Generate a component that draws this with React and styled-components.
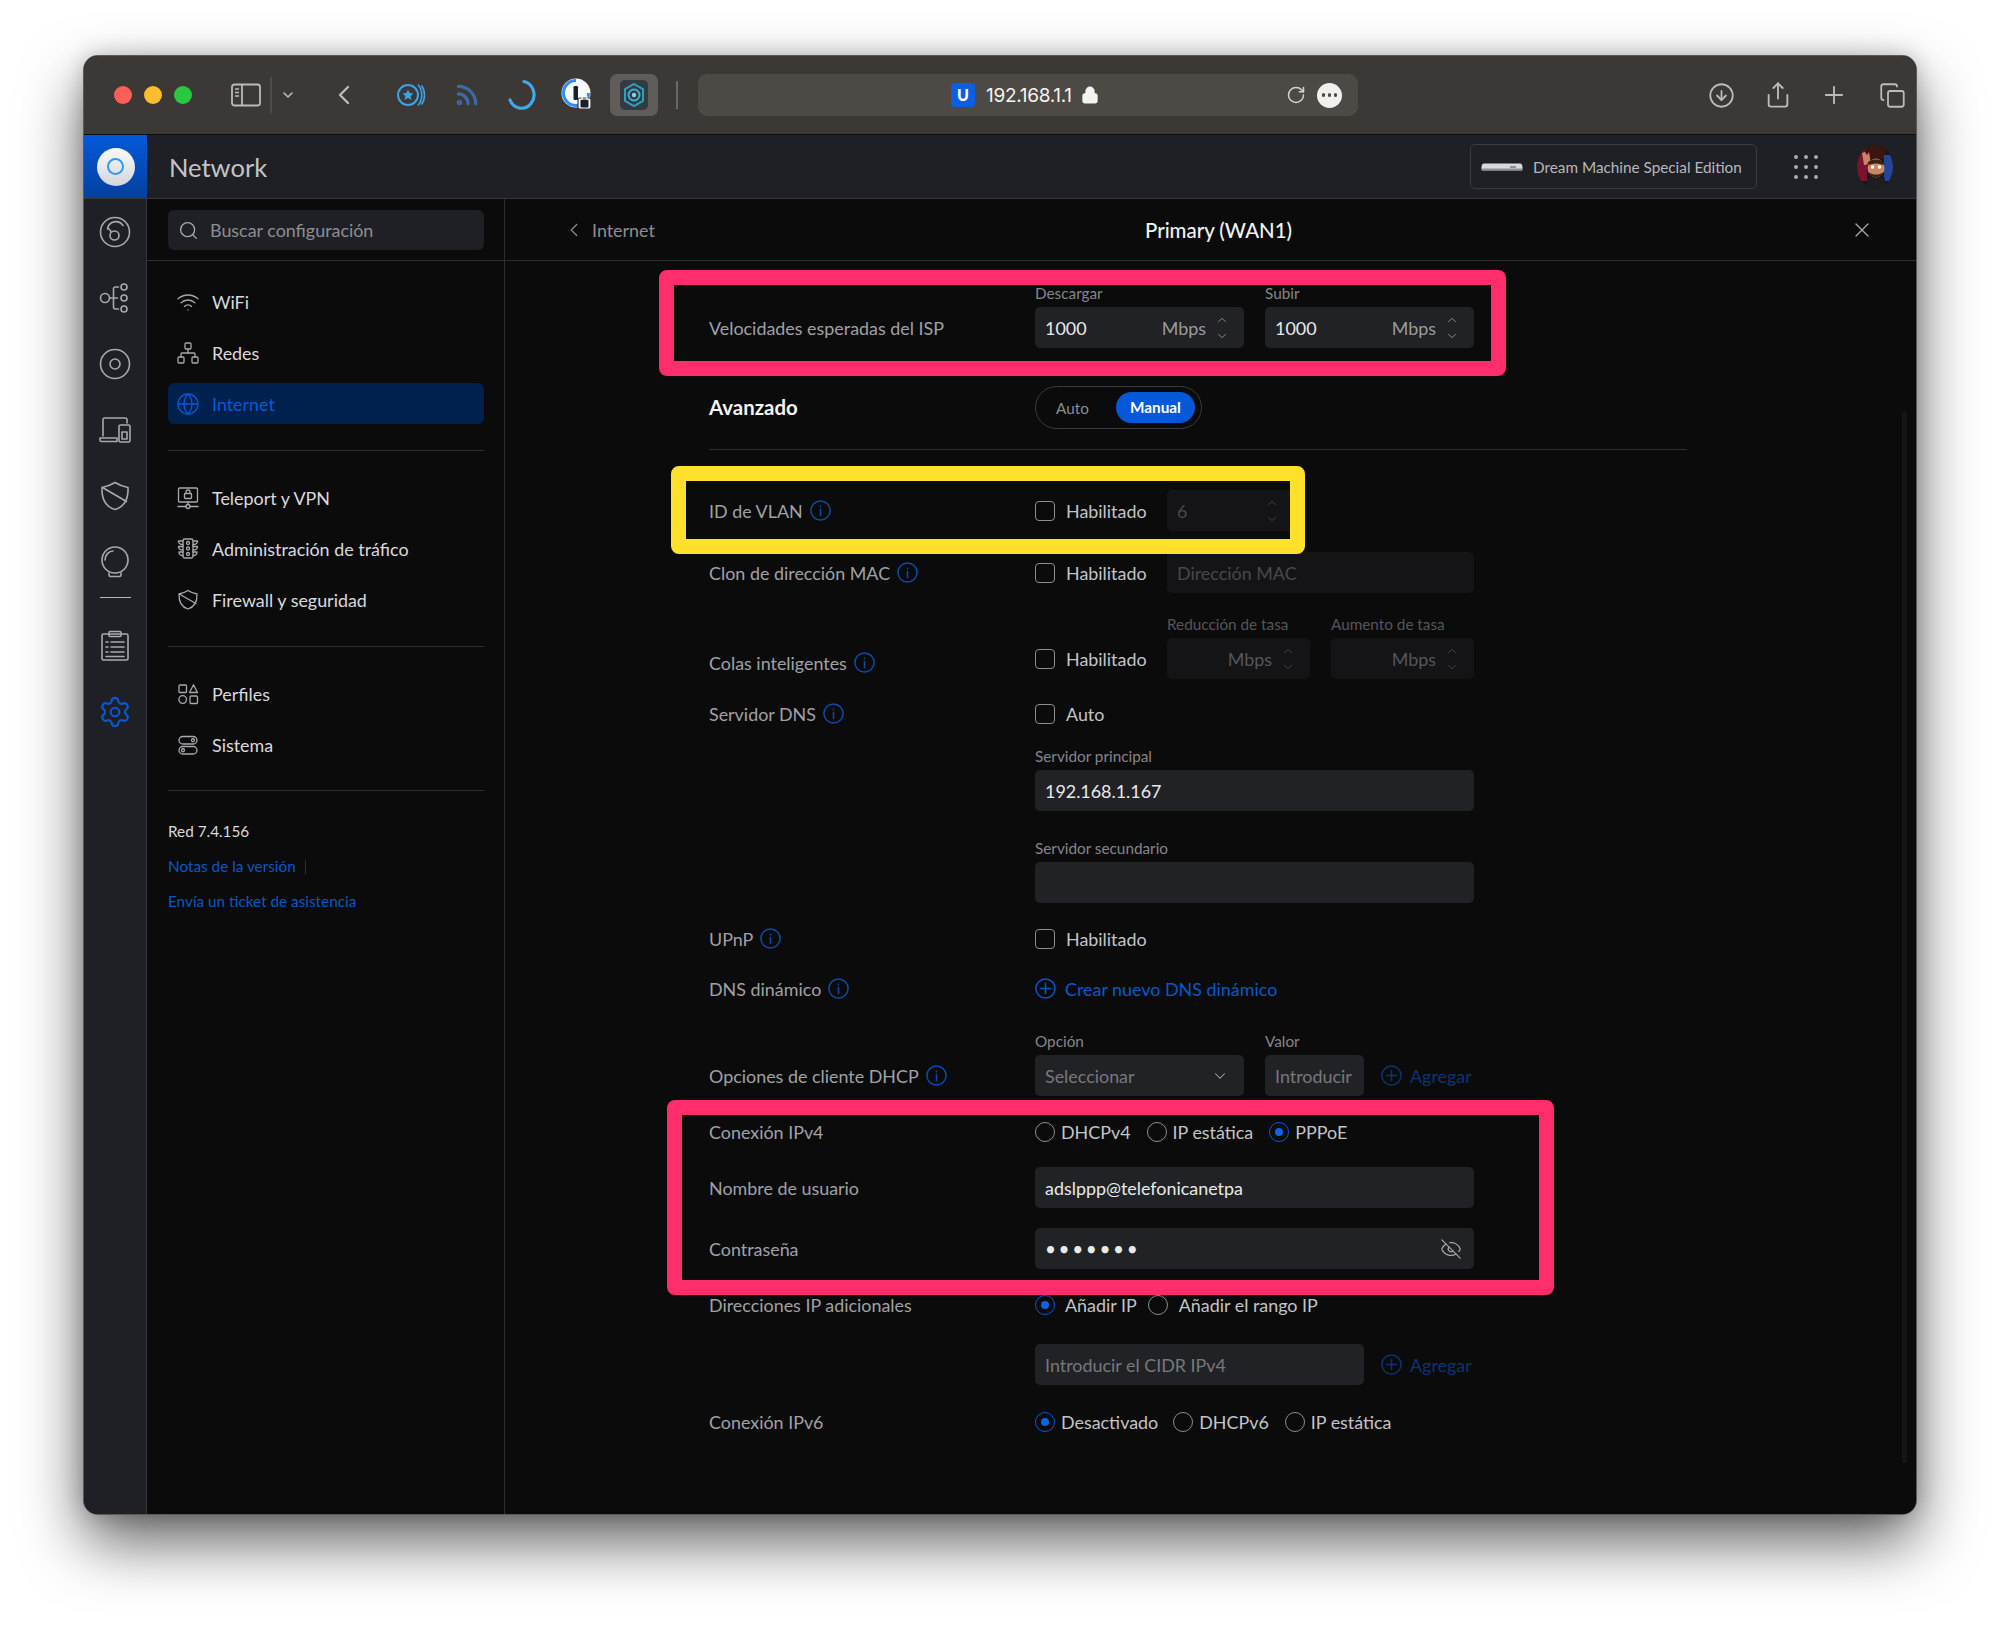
import React from "react"
import styled, { createGlobalStyle } from "styled-components"
import {
  ChevronDown,
  ChevronLeft,
  ChevronUp,
  CircleArrowDown,
  Copy,
  EyeOff,
  Globe,
  Lock,
  Network,
  Plus,
  RotateCw,
  Rss,
  Search,
  Settings,
  Share,
  Wifi,
  X,
} from "lucide-react"

const GlobalStyle = createGlobalStyle`
  html, body {
    margin: 0;
    background: #fff;
  }
  body {
    font-family: "Lato", "Liberation Sans", sans-serif;
    -webkit-font-smoothing: antialiased;
  }
  * { box-sizing: border-box; }
`

const Page = styled.div`
  width: 2000px;
  height: 1625px;
  padding: 56px 84px 111px;
  background: #fff;
`

const Window = styled.div`
  width: 1832px;
  height: 1458px;
  display: flex;
  flex-direction: column;
  overflow: hidden;
  border-radius: 14px;
  background: #0b0b0c;
  box-shadow: 0 0 0 1px #5c5a58, 0 28px 62px rgba(0, 0, 0, 0.62), 0 0 22px rgba(0, 0, 0, 0.22);
`

/* safari toolbar */
const Toolbar = styled.div`
  flex: 0 0 79px;
  height: 79px;
  display: flex;
  align-items: center;
  padding-left: 30px;
  background: #3c3835;
  border-bottom: 1px solid #0c0c0c;
  color: #bdbab7;
`

const Light = styled.span`
  width: 18px;
  height: 18px;
  margin-right: 12px;
  border-radius: 50%;
  background: ${props => props.$color};
`

const Slot = styled.div`
  flex: 0 0 ${props => props.$w}px;
  height: 42px;
  margin-left: ${props => props.$ml || 0}px;
  display: flex;
  align-items: center;
  justify-content: center;
  color: ${props => props.$color || "inherit"};
`

const ActiveTile = styled(Slot)`
  background: #605c59;
  border-radius: 7px;
`

const Sep = styled.span`
  flex: 0 0 2px;
  height: ${props => props.$h}px;
  margin-left: ${props => props.$ml}px;
  background: ${props => props.$color};
`

const AddressBar = styled.div`
  flex: 0 0 660px;
  height: 42px;
  margin-left: 20px;
  padding: 0 16px 0 250px;
  display: flex;
  align-items: center;
  background: #4d4945;
  border-radius: 9px;
  color: #f4f3f2;
`

const SiteLogo = styled.span`
  width: 24px;
  height: 24px;
  margin-left: 3px;
  border-radius: 4px;
  background: #0b5fe0;
  color: #fff;
  font-size: 16px;
  font-weight: 900;
  line-height: 24px;
  text-align: center;
`

const Host = styled.span`
  margin-left: 11px;
  font-family: "Inter", "Liberation Sans", sans-serif;
  font-size: 19px;
  letter-spacing: -0.3px;
`

const MoreDots = styled.span`
  width: 25px;
  height: 25px;
  margin-left: 11px;
  display: flex;
  align-items: center;
  justify-content: center;
  gap: 2.5px;
  border-radius: 50%;
  background: #f1f0ef;

  i {
    width: 3.5px;
    height: 3.5px;
    border-radius: 50%;
    background: #4d4945;
  }
`

/* app header */
const Header = styled.header`
  flex: 0 0 64px;
  display: flex;
  align-items: center;
  background: #1f2025;
  border-bottom: 1px solid #35363a;
`

const LogoCell = styled.div`
  width: 63px;
  height: 63px;
  display: flex;
  align-items: center;
  justify-content: center;
  background: linear-gradient(180deg, #0559d9 0%, #03409f 100%);
`

const LogoPuck = styled.div`
  width: 38px;
  height: 38px;
  display: flex;
  align-items: center;
  justify-content: center;
  border-radius: 50%;
  background: linear-gradient(180deg, #fafafa, #d3d5da);

  span {
    width: 17px;
    height: 17px;
    border-radius: 50%;
    border: 2px solid #2f9bf0;
  }
`

const AppTitle = styled.div`
  margin-left: 22px;
  font-size: 25.5px;
  color: #c3c4c7;
`

const DeviceButton = styled.div`
  width: 287px;
  height: 45px;
  margin-left: auto;
  padding-left: 10px;
  display: flex;
  align-items: center;
  gap: 10px;
  border: 1px solid #3a3b40;
  border-radius: 5px;
  font-size: 15.3px;
  color: #b6b7ba;
`

const AppsGrid = styled.div`
  width: 24px;
  margin-left: 37px;
  display: grid;
  grid-template-columns: repeat(3, 4px);
  justify-content: space-between;
  row-gap: 6px;

  i {
    width: 4px;
    height: 4px;
    border-radius: 50%;
    background: #a9aaad;
  }
`

const AvatarWrap = styled.div`
  width: 36px;
  height: 36px;
  margin: 0 23px 0 39px;
`

const Body = styled.div`
  flex: 1;
  min-height: 0;
  display: flex;
`

/* icon rail */
const Rail = styled.nav`
  flex: 0 0 63px;
  padding-top: 16px;
  display: flex;
  flex-direction: column;
  align-items: center;
  background: #1f2025;
  border-right: 1px solid #35363a;
  color: #a8a9ac;
`

const RailIcon = styled.div`
  width: 34px;
  height: 34px;
  margin-bottom: 32px;
  color: ${props => props.$color || "inherit"};
`

const RailLine = styled.div`
  width: 31px;
  height: 1px;
  margin: -14px 0 31px;
  background: #b6b7ba;
`

/* settings sidebar */
const Sidebar = styled.aside`
  flex: 0 0 358px;
  display: flex;
  flex-direction: column;
  background: #0b0b0c;
  border-right: 1px solid #2e2f32;
`

const SearchRow = styled.div`
  height: 62px;
  padding: 11px 20px 0 21px;
  border-bottom: 1px solid #2e2f32;
`

const SearchBox = styled.div`
  height: 40px;
  padding-left: 10px;
  display: flex;
  align-items: center;
  gap: 11px;
  border-radius: 6px;
  background: #1f2025;
  font-size: 17.9px;
  color: #8d8e92;
`

const NavGroup = styled.div`
  margin: ${props => props.$top}px 20px 0 21px;
  padding-bottom: ${props => props.$bottom || 26}px;
  display: flex;
  flex-direction: column;
  gap: 10px;
  border-bottom: 1px solid #2e2f32;
`

const NavItem = styled.div`
  height: 41px;
  padding-left: 8px;
  display: flex;
  align-items: center;
  gap: 12px;
  border-radius: 6px;
  font-size: 17.9px;
  background: ${props => (props.$active ? "#00204d" : "transparent")};
  color: ${props => (props.$active ? "#0559d9" : "#d9dadc")};

  svg {
    flex: 0 0 24px;
    color: ${props => (props.$active ? "#0559d9" : "#a8a9ac")};
  }
`

const SideMeta = styled.div`
  margin: 30px 0 0 21px;
  font-size: 15.3px;
  line-height: 20px;
  color: #d9dadc;
`

const MetaLink = styled.div`
  margin-top: 15px;
  color: #0559c9;

  span {
    display: inline-block;
    width: 1px;
    height: 14px;
    margin-left: 9px;
    background: #2e2f32;
    vertical-align: -2px;
  }
`

/* form panel */
const Main = styled.main`
  position: relative;
  flex: 1;
  min-width: 0;
  overflow: hidden;
  background: #0b0b0c;
`

const PanelHeader = styled.div`
  height: 62px;
  padding: 0 42px 0 58px;
  display: flex;
  align-items: center;
  border-bottom: 1px solid #2e2f32;
  color: #8d8e92;
`

const BackLabel = styled.div`
  flex: 1;
  display: flex;
  align-items: center;
  gap: 7px;
  font-size: 17.9px;
`

const PanelTitle = styled.div`
  font-size: 20.4px;
  font-weight: 500;
  color: #f2f2f3;
`

const CloseWrap = styled.div`
  flex: 1;
  display: flex;
  justify-content: flex-end;
  color: #a8a9ac;
`

const Form = styled.div`
  padding: 25px 0 0 204px;
`

const Row = styled.div`
  display: grid;
  grid-template-columns: 326px 439px;
  align-items: end;
  margin-top: ${props => props.$mt || 0}px;
`

const RowLabel = styled.div`
  height: 41px;
  display: flex;
  align-items: center;
  gap: 7px;
  font-size: 17.9px;
  color: #a0a1a5;
  transform: translateY(${props => props.$nudge || 0}px);
`

const SectionTitle = styled.div`
  height: 43px;
  line-height: 43px;
  font-size: 20.4px;
  font-weight: 700;
  color: #f5f5f6;
`

const Controls = styled.div`
  display: flex;
  align-items: flex-end;
  gap: ${props => props.$gap || 0}px;
`

const Stack = styled.div`
  flex: 0 0 ${props => props.$w}px;
  width: ${props => props.$w}px;
`

const SmallLabel = styled.div`
  height: 21px;
  font-size: 15.3px;
  line-height: 15px;
  white-space: nowrap;
  color: ${props => (props.$off ? "#55565a" : "#85868a")};
`

const Field = styled.div`
  flex: 0 0 ${props => props.$w ? `${props.$w}px` : "auto"};
  width: ${props => props.$w ? `${props.$w}px` : "100%"};
  height: 41px;
  padding: 0 ${props => props.$pr ?? 10}px 0 10px;
  display: flex;
  align-items: center;
  border-radius: 5px;
  font-size: 17.9px;
  background: ${props => (props.$off ? "#141416" : "#212226")};
  color: ${props => (props.$off ? "#47484c" : props.$hint ? "#77787c" : "#e9e9ea")};
`

const Unit = styled.span`
  margin-left: auto;
  margin-right: 9px;
  color: ${props => (props.$off ? "#55565a" : "#9a9b9f")};
`

const SpinWrap = styled.span`
  width: 14px;
  height: 30px;
  display: flex;
  flex-direction: column;
  justify-content: space-between;
  color: ${props => (props.$off ? "#55565a" : "#a8a9ac")};
`

const PassDots = styled.span`
  font-size: 19px;
  letter-spacing: 2.6px;
  color: #e9e9ea;
`

const TailIcon = styled.span`
  margin-left: auto;
  display: flex;
  color: #a8a9ac;
`

const CheckRow = styled.label`
  flex: 0 0 ${props => (props.$w ? `${props.$w}px` : "auto")};
  height: 41px;
  display: flex;
  align-items: center;
  gap: 11px;
  font-size: 17.9px;
  color: #c3c4c7;
`

const Box = styled.span`
  width: 20px;
  height: 20px;
  border: 1.5px solid #8d8e92;
  border-radius: 4px;
`

const RadioRow = styled.div`
  height: 41px;
  display: flex;
  align-items: center;
`

const RadioItem = styled.span`
  margin-right: ${props => props.$mr}px;
  display: flex;
  align-items: center;
  gap: ${props => props.$gap}px;
  font-size: 17.9px;
  color: #c3c4c7;
`

const RadioDot = styled.span`
  width: 20px;
  height: 20px;
  display: flex;
  align-items: center;
  justify-content: center;
  border-radius: 50%;
  border: 1.5px solid ${props => (props.$on ? "#0559d9" : "#8d8e92")};

  &::after {
    content: "";
    width: 8px;
    height: 8px;
    border-radius: 50%;
    background: ${props => (props.$on ? "#0b63e5" : "transparent")};
  }
`

const LinkRow = styled.div`
  height: 41px;
  display: flex;
  align-items: center;
  gap: 9px;
  font-size: 17.9px;
  color: #0559c9;
`

const AddRow = styled.div`
  margin-left: ${props => props.$ml || 0}px;
  height: 41px;
  display: flex;
  align-items: center;
  gap: 8px;
  font-size: 17.9px;
  color: #0b3470;
`

const Toggle = styled.div`
  width: 167px;
  height: 43px;
  padding: 0 6px 0 20px;
  display: flex;
  align-items: center;
  justify-content: space-between;
  border: 1.5px solid #3a3b40;
  border-radius: 22px;
  font-size: 15.3px;
  color: #8d8e92;

  b {
    width: 79px;
    height: 31px;
    line-height: 31px;
    text-align: center;
    border-radius: 16px;
    font-weight: 700;
    background: #0559d9;
    color: #fff;
  }
`

const Divider = styled.div`
  width: 978px;
  height: 1px;
  margin-top: 20px;
  background: #2e2f32;
`

const Highlight = styled.div`
  position: absolute;
  left: ${props => props.$x}px;
  top: ${props => props.$y}px;
  width: ${props => props.$w}px;
  height: ${props => props.$h}px;
  border: 15px solid ${props => props.$color};
  border-radius: 8px;
`

const ScrollTrack = styled.div`
  position: absolute;
  right: 9px;
  top: 212px;
  width: 5px;
  height: 1052px;
  border-radius: 3px;
  background: #151516;
`

const Icon = ({ size = 30, vb = 30, sw = 1.6, children }) => (
  <svg width={size} height={size} viewBox={`0 0 ${vb} ${vb}`} fill="none" stroke="currentColor" strokeWidth={sw} strokeLinecap="round" strokeLinejoin="round">
    {children}
  </svg>
)

const InfoIcon = () => (
  <svg width="21" height="21" viewBox="0 0 21 21" fill="none" stroke="#0a4cab" strokeWidth="1.5" strokeLinecap="round">
    <circle cx="10.5" cy="10.5" r="9.6" />
    <path d="M10.5 9.5v6" />
    <path d="M10.5 6.2v.5" />
  </svg>
)

const PlusCircle = ({ color }) => (
  <svg width="21" height="21" viewBox="0 0 21 21" fill="none" stroke={color} strokeWidth="1.5" strokeLinecap="round">
    <circle cx="10.5" cy="10.5" r="9.6" />
    <path d="M10.5 5.5v10M5.5 10.5h10" />
  </svg>
)

const Spin = ({ off }) => (
  <SpinWrap $off={off}>
    <ChevronUp size={14} strokeWidth={1.3} />
    <ChevronDown size={14} strokeWidth={1.3} />
  </SpinWrap>
)

const SidebarToggleIcon = () => (
  <svg width="30" height="24" viewBox="0 0 30 24" fill="none" stroke="currentColor" strokeWidth="1.8">
    <rect x="1" y="1.5" width="28" height="21" rx="2.5" />
    <path d="M11 1.5v21" />
    <path d="M4 6h4M4 9.5h4M4 13h4" strokeWidth="1.4" />
  </svg>
)

const StarBeacon = () => (
  <svg width="30" height="30" viewBox="0 0 30 30" fill="none" stroke="#39a4ea" strokeWidth="2">
    <circle cx="12" cy="15" r="10" />
    <path d="M12 9.5l1.6 3.6 3.9.4-2.9 2.6.8 3.8-3.4-2-3.4 2 .8-3.8-2.9-2.6 3.9-.4z" fill="#39a4ea" stroke="none" />
    <path d="M22 4.5c5 6 5 15 0 21M25.5 5.5c4 5.5 4 13.500 0 19" strokeWidth="1.6" />
  </svg>
)

const RingSpinner = () => (
  <svg width="30" height="34" viewBox="0 0 30 34" fill="none" stroke="#3fa9ec" strokeWidth="3.2" strokeLinecap="round">
    <path d="M17 3.500A12.500 13.500 0 1 1 3 22" />
  </svg>
)

const OnePassword = () => (
  <svg width="32" height="38" viewBox="0 0 32 38">
    <circle cx="15" cy="17" r="14.500" fill="#f8f9fb" />
    <path d="M15 4.500A12.500 12.500 0 1 0 27.500 17" fill="none" stroke="#2f8cf0" strokeWidth="3" />
    <rect x="12.500" y="10" width="4.500" height="14" rx="1.200" fill="#1a1f2b" />
    <rect x="17" y="22" width="13" height="11" rx="2" fill="#f8f9fb" stroke="#3c3835" strokeWidth="1.200" />
    <rect x="19.500" y="23.500" width="8" height="8" rx="1.200" fill="#1a1f2b" />
    <path d="M21 24v-2.200a2.500 2.500 0 0 1 5 0V24" fill="none" stroke="#f8f9fb" strokeWidth="1.300" />
  </svg>
)

const HexExtension = () => (
  <svg width="28" height="30" viewBox="0 0 28 30">
    <rect width="28" height="30" rx="5" fill="#343a3f" />
    <path d="M14 3.500l9 5.200v11.600l-9 5.200-9-5.200V8.700z" fill="none" stroke="#2c9fc4" strokeWidth="2" transform="translate(0 .5)" />
    <circle cx="14" cy="15" r="5.500" fill="none" stroke="#36b3d8" strokeWidth="2" />
    <circle cx="14" cy="15" r="2.200" fill="#7fd4ea" />
  </svg>
)

const DeviceBar = () => (
  <svg width="42" height="12" viewBox="0 0 42 12">
    <path d="M3 2.500h36c1.500 0 2.500 1.500 2.500 4v1.500c0 1-.5 1.500-1.500 1.500H2c-1 0-1.500-.5-1.500-1.500V6.500C.5 4 1.500 2.500 3 2.500z" fill="#d8d9db" />
    <path d="M.8 7.500h40.400v1.500H.8z" fill="#8f9094" />
    <rect x="29" y="5" width="6" height="2" fill="#8f9094" />
  </svg>
)

const Avatar = () => (
  <svg width="36" height="44" viewBox="0 0 36 44" style={{ marginTop: -4 }}>
    <defs>
      <clipPath id="avatarClip">
        <ellipse cx="18" cy="22" rx="18" ry="21.500" />
      </clipPath>
    </defs>
    <g clipPath="url(#avatarClip)">
      <rect width="36" height="44" fill="#17181c" />
      <rect x="0" y="0" width="10" height="36" fill="#7a1230" />
      <rect x="8" y="0" width="20" height="14" fill="#3b1512" />
      <rect x="27" y="10" width="9" height="26" fill="#23459a" />
      <path d="M7 20l-2-12 3-1 2 3 2-3 2 12z" fill="#c98268" />
      <ellipse cx="19" cy="23" rx="8.500" ry="9.500" fill="#c98860" />
      <path d="M10.500 19c0-6 17-6 17 0l-2 1c-4-2-9-2-13 0z" fill="#3a2114" />
      <path d="M11 27c3 7 13 7 16 0l-2 1c-3 2-9 2-12 0z" fill="#3a2114" />
      <circle cx="15.500" cy="22" r="1.800" fill="#fff" />
      <circle cx="22.500" cy="22" r="1.800" fill="#fff" />
      <rect x="10" y="33" width="18" height="11" fill="#1d1e22" />
    </g>
  </svg>
)

const RailDashboard = () => (
  <Icon size={34} vb={34}>
    <circle cx="17" cy="17" r="14.500" />
    <path d="M9.500 14A8.500 8.500 0 0 1 25 10.500" />
    <circle cx="16.500" cy="20.500" r="4.500" />
    <path d="M13.500 17l-3.500-4" />
  </Icon>
)

const RailTopology = () => (
  <Icon size={34} vb={34}>
    <circle cx="7" cy="17" r="4.500" />
    <path d="M11.500 17h8M15.500 17V8c0-1.500 1-2 2-2h3M15.500 17v9c0 1.500 1 2 2 2h3" />
    <circle cx="26" cy="6" r="3" />
    <circle cx="26" cy="17" r="3" />
    <circle cx="26" cy="28" r="3" />
  </Icon>
)

const RailClients = () => (
  <Icon size={34} vb={34}>
    <circle cx="17" cy="17" r="14.500" />
    <circle cx="17" cy="17" r="5" />
  </Icon>
)

const RailDevices = () => (
  <Icon size={34} vb={34}>
    <path d="M5 23V6.500C5 5.500 5.500 5 6.500 5h21c1 0 1.500.5 1.500 1.500V10" />
    <path d="M2 27c0 1 .5 1.500 1.500 1.500H19V25H2z" />
    <rect x="21" y="12" width="11" height="17" rx="1.500" />
    <rect x="24" y="19" width="5" height="7" />
  </Icon>
)

const RailShield = () => (
  <Icon size={34} vb={34}>
    <path d="M4 8.500C9 7.500 13 6 17 3.500c4 2.500 8 4 13 5 .5 11-3.500 19-13 22-9.500-3-13.500-11-13-22z" />
    <path d="M4.500 8.500l24 14" />
  </Icon>
)

const RailInsights = () => (
  <Icon size={34} vb={34}>
    <circle cx="17" cy="15" r="13" />
    <path d="M7 15c0-5 4-9 8-9" />
    <path d="M11 28v2c0 1 .5 1.500 1.500 1.500h9c1 0 1.500-.5 1.500-1.500v-2" />
  </Icon>
)

const RailLogs = () => (
  <Icon size={34} vb={34}>
    <rect x="4" y="5" width="26" height="26" rx="1.500" />
    <rect x="11" y="2.500" width="12" height="5" rx="1" />
    <path d="M8 13h2M13 13h13M8 18h2M13 18h13M8 23h2M13 23h13M8 27.500h18" />
  </Icon>
)

const NavIconBox = ({ children }) => (
  <svg width="24" height="24" viewBox="0 0 24 24" fill="none" stroke="currentColor" strokeWidth="1.300" strokeLinecap="round" strokeLinejoin="round">
    {children}
  </svg>
)

const TeleportIcon = () => (
  <NavIconBox>
    <rect x="2.500" y="2" width="19" height="14" rx="1" />
    <rect x="8.500" y="7.500" width="7" height="5" rx=".8" />
    <path d="M10 7.500V6a2 2 0 0 1 4 0v1.500" />
    <path d="M2 20.500h8M14 20.500h8" />
    <circle cx="12" cy="20.500" r="2" />
    <path d="M12 16v2.500" />
  </NavIconBox>
)

const TrafficIcon = () => (
  <NavIconBox>
    <rect x="7" y="2" width="10" height="19" rx="1.500" />
    <circle cx="12" cy="6" r="1.500" />
    <circle cx="12" cy="11.500" r="1.500" />
    <circle cx="12" cy="17" r="1.500" />
    <path d="M7 4H2.500c0 2 1.500 3.500 4.500 3.500M7 9.500H2.500c0 2 1.500 3.500 4.500 3.500M7 15H3c0 2 1.500 3.500 4 3.500" />
    <path d="M17 4h4.500c0 2-1.500 3.500-4.500 3.500M17 9.500h4.500c0 2-1.500 3.500-4.500 3.500M17 15h4c0 2-1.500 3.500-4 3.500" />
  </NavIconBox>
)

const FirewallIcon = () => (
  <NavIconBox>
    <path d="M3 6c3.500-.7 6.300-1.700 9-3.500 2.700 1.800 5.500 2.800 9 3.500.3 7.500-2.500 13-9 15C5.500 19 2.700 13.500 3 6z" />
    <path d="M3.300 6l16.500 9.500" />
  </NavIconBox>
)

const ProfilesIcon = () => (
  <NavIconBox>
    <rect x="3" y="3" width="7.500" height="7.500" rx="1" />
    <path d="M17.500 2.800l4 7.700h-8z" />
    <circle cx="6.700" cy="17.500" r="3.800" />
    <rect x="14" y="14" width="7.500" height="7.500" rx="1" />
  </NavIconBox>
)

const SystemIcon = () => (
  <NavIconBox>
    <rect x="3" y="3.500" width="18" height="7.500" rx="3.750" />
    <circle cx="17" cy="7.250" r="1.500" />
    <rect x="3" y="13.500" width="18" height="7.500" rx="3.750" />
    <circle cx="7" cy="17.250" r="1.500" />
  </NavIconBox>
)

const Info = InfoIcon

const Radio = ({ on, mr, gap, children }) => (
  <RadioItem $mr={mr} $gap={gap}>
    <RadioDot $on={on} />
    {children}
  </RadioItem>
)

const Check = ({ w, children }) => (
  <CheckRow $w={w}>
    <Box />
    {children}
  </CheckRow>
)

export default function App() {
  return (
    <Page>
      <GlobalStyle />
      <Window>
        <Toolbar>
          <Light $color="#ff5f57" />
          <Light $color="#febc2e" />
          <Light $color="#28c840" />
          <Slot $w={30} $ml={27}><SidebarToggleIcon /></Slot>
          <Sep $h={36} $ml={9} $color="#4f4b48" />
          <Slot $w={14} $ml={8}><ChevronDown size={16} strokeWidth={2.4} /></Slot>
          <Slot $w={18} $ml={32}><ChevronLeft size={32} strokeWidth={1.8} /></Slot>
          <Slot $w={30} $ml={36}><StarBeacon /></Slot>
          <Slot $w={26} $ml={28} $color="#3c6aa8"><Rss size={26} strokeWidth={3} /></Slot>
          <Slot $w={30} $ml={27}><RingSpinner /></Slot>
          <Slot $w={32} $ml={24}><OnePassword /></Slot>
          <ActiveTile $w={48} $ml={17}><HexExtension /></ActiveTile>
          <Sep $h={28} $ml={18} $color="#6b6764" />
          <AddressBar>
            <SiteLogo>U</SiteLogo>
            <Host>192.168.1.1</Host>
            <Lock size={18} strokeWidth={2.4} fill="#f4f3f2" style={{ marginLeft: 9 }} />
            <RotateCw size={20} strokeWidth={1.8} color="#d6d4d2" style={{ marginLeft: "auto" }} />
            <MoreDots><i /><i /><i /></MoreDots>
          </AddressBar>
          <Slot $w={28} $ml={349}><CircleArrowDown size={27} strokeWidth={1.6} /></Slot>
          <Slot $w={26} $ml={29}><Share size={28} strokeWidth={1.6} /></Slot>
          <Slot $w={26} $ml={28}><Plus size={28} strokeWidth={1.6} /></Slot>
          <Slot $w={28} $ml={30}><Copy size={27} strokeWidth={1.6} /></Slot>
        </Toolbar>

        <Header>
          <LogoCell>
            <LogoPuck><span /></LogoPuck>
          </LogoCell>
          <AppTitle>Network</AppTitle>
          <DeviceButton>
            <DeviceBar />
            Dream Machine Special Edition
          </DeviceButton>
          <AppsGrid>
            {Array.from({ length: 9 }).map((_, i) => <i key={i} />)}
          </AppsGrid>
          <AvatarWrap><Avatar /></AvatarWrap>
        </Header>

        <Body>
          <Rail>
            <RailIcon><RailDashboard /></RailIcon>
            <RailIcon><RailTopology /></RailIcon>
            <RailIcon><RailClients /></RailIcon>
            <RailIcon><RailDevices /></RailIcon>
            <RailIcon><RailShield /></RailIcon>
            <RailIcon><RailInsights /></RailIcon>
            <RailLine />
            <RailIcon><RailLogs /></RailIcon>
            <RailIcon $color="#0559d9"><Settings size={34} strokeWidth={1.5} /></RailIcon>
          </Rail>

          <Sidebar>
            <SearchRow>
              <SearchBox>
                <Search size={21} strokeWidth={1.5} color="#a8a9ac" />
                Buscar configuración
              </SearchBox>
            </SearchRow>
            <NavGroup $top={20}>
              <NavItem><Wifi size={24} strokeWidth={1.3} />WiFi</NavItem>
              <NavItem><Network size={24} strokeWidth={1.3} />Redes</NavItem>
              <NavItem $active><Globe size={24} strokeWidth={1.3} />Internet</NavItem>
            </NavGroup>
            <NavGroup $top={26}>
              <NavItem><TeleportIcon />Teleport y VPN</NavItem>
              <NavItem><TrafficIcon />Administración de tráfico</NavItem>
              <NavItem><FirewallIcon />Firewall y seguridad</NavItem>
            </NavGroup>
            <NavGroup $top={26} $bottom={25}>
              <NavItem><ProfilesIcon />Perfiles</NavItem>
              <NavItem><SystemIcon />Sistema</NavItem>
            </NavGroup>
            <SideMeta>
              Red 7.4.156
              <MetaLink>Notas de la versión<span /></MetaLink>
              <MetaLink>Envía un ticket de asistencia</MetaLink>
            </SideMeta>
          </Sidebar>

          <Main>
            <PanelHeader>
              <BackLabel><ChevronLeft size={22} strokeWidth={1.3} />Internet</BackLabel>
              <PanelTitle>Primary (WAN1)</PanelTitle>
              <CloseWrap><X size={24} strokeWidth={1.3} /></CloseWrap>
            </PanelHeader>

            <Form>
              <Row>
                <RowLabel>Velocidades esperadas del ISP</RowLabel>
                <Controls $gap={21}>
                  <Stack $w={209}>
                    <SmallLabel>Descargar</SmallLabel>
                    <Field $pr={15}>1000<Unit>Mbps</Unit><Spin /></Field>
                  </Stack>
                  <Stack $w={209}>
                    <SmallLabel>Subir</SmallLabel>
                    <Field $pr={15}>1000<Unit>Mbps</Unit><Spin /></Field>
                  </Stack>
                </Controls>
              </Row>

              <Row $mt={38}>
                <SectionTitle>Avanzado</SectionTitle>
                <Toggle>Auto<b>Manual</b></Toggle>
              </Row>
              <Divider />

              <Row $mt={40}>
                <RowLabel>ID de VLAN <Info /></RowLabel>
                <Controls>
                  <Check w={132}>Habilitado</Check>
                  <Field $w={127} $off $pr={15}>6<Unit /><Spin off /></Field>
                </Controls>
              </Row>

              <Row $mt={21}>
                <RowLabel>Clon de dirección MAC <Info /></RowLabel>
                <Controls>
                  <Check w={132}>Habilitado</Check>
                  <Field $w={307} $off>Dirección MAC</Field>
                </Controls>
              </Row>

              <Row $mt={24}>
                <RowLabel $nudge={4}>Colas inteligentes <Info /></RowLabel>
                <Controls>
                  <Check w={132}>Habilitado</Check>
                  <Stack $w={143}>
                    <SmallLabel $off>Reducción de tasa</SmallLabel>
                    <Field $off $pr={15}><Unit $off>Mbps</Unit><Spin off /></Field>
                  </Stack>
                  <Stack $w={143} style={{ marginLeft: 21 }}>
                    <SmallLabel $off>Aumento de tasa</SmallLabel>
                    <Field $off $pr={15}><Unit $off>Mbps</Unit><Spin off /></Field>
                  </Stack>
                </Controls>
              </Row>

              <Row $mt={14}>
                <RowLabel>Servidor DNS <Info /></RowLabel>
                <Controls><Check>Auto</Check></Controls>
              </Row>

              <Row $mt={15}>
                <span />
                <Stack $w={439}>
                  <SmallLabel>Servidor principal</SmallLabel>
                  <Field>192.168.1.167</Field>
                </Stack>
              </Row>

              <Row $mt={30}>
                <span />
                <Stack $w={439}>
                  <SmallLabel>Servidor secundario</SmallLabel>
                  <Field />
                </Stack>
              </Row>

              <Row $mt={15}>
                <RowLabel>UPnP <Info /></RowLabel>
                <Controls><Check>Habilitado</Check></Controls>
              </Row>

              <Row $mt={9}>
                <RowLabel>DNS dinámico <Info /></RowLabel>
                <LinkRow><PlusCircle color="#0559c9" />Crear nuevo DNS dinámico</LinkRow>
              </Row>

              <Row $mt={25}>
                <RowLabel>Opciones de cliente DHCP <Info /></RowLabel>
                <Controls>
                  <Stack $w={209}>
                    <SmallLabel>Opción</SmallLabel>
                    <Field $hint $pr={15}>
                      Seleccionar
                      <TailIcon><ChevronDown size={18} strokeWidth={1.4} /></TailIcon>
                    </Field>
                  </Stack>
                  <Stack $w={99} style={{ marginLeft: 21 }}>
                    <SmallLabel>Valor</SmallLabel>
                    <Field $hint>Introducir</Field>
                  </Stack>
                  <AddRow $ml={17}><PlusCircle color="#0b3470" />Agregar</AddRow>
                </Controls>
              </Row>

              <Row $mt={15}>
                <RowLabel>Conexión IPv4</RowLabel>
                <RadioRow>
                  <Radio mr={16} gap={6}>DHCPv4</Radio>
                  <Radio mr={16} gap={6}>IP estática</Radio>
                  <Radio on mr={0} gap={6}>PPPoE</Radio>
                </RadioRow>
              </Row>

              <Row $mt={15}>
                <RowLabel>Nombre de usuario</RowLabel>
                <Field>adslppp@telefonicanetpa</Field>
              </Row>

              <Row $mt={20}>
                <RowLabel>Contraseña</RowLabel>
                <Field $pr={12}>
                  <PassDots>•••••••</PassDots>
                  <TailIcon><EyeOff size={22} strokeWidth={1.3} /></TailIcon>
                </Field>
              </Row>

              <Row $mt={15}>
                <RowLabel>Direcciones IP adicionales</RowLabel>
                <RadioRow>
                  <Radio on mr={11} gap={10}>Añadir IP</Radio>
                  <Radio mr={0} gap={11}>Añadir el rango IP</Radio>
                </RadioRow>
              </Row>

              <Row $mt={19}>
                <span />
                <Controls>
                  <Field $w={329} $hint>Introducir el CIDR IPv4</Field>
                  <AddRow $ml={17}><PlusCircle color="#0b3470" />Agregar</AddRow>
                </Controls>
              </Row>

              <Row $mt={16}>
                <RowLabel>Conexión IPv6</RowLabel>
                <RadioRow>
                  <Radio on mr={15} gap={6}>Desactivado</Radio>
                  <Radio mr={16} gap={6}>DHCPv6</Radio>
                  <Radio mr={0} gap={6}>IP estática</Radio>
                </RadioRow>
              </Row>
            </Form>

            <ScrollTrack />
            <Highlight $x={154} $y={71} $w={847} $h={106} $color="#ff2d6b" />
            <Highlight $x={166} $y={267} $w={634} $h={88} $color="#ffe02b" />
            <Highlight $x={162} $y={901} $w={887} $h={195} $color="#ff2d6b" />
          </Main>
        </Body>
      </Window>
    </Page>
  )
}
